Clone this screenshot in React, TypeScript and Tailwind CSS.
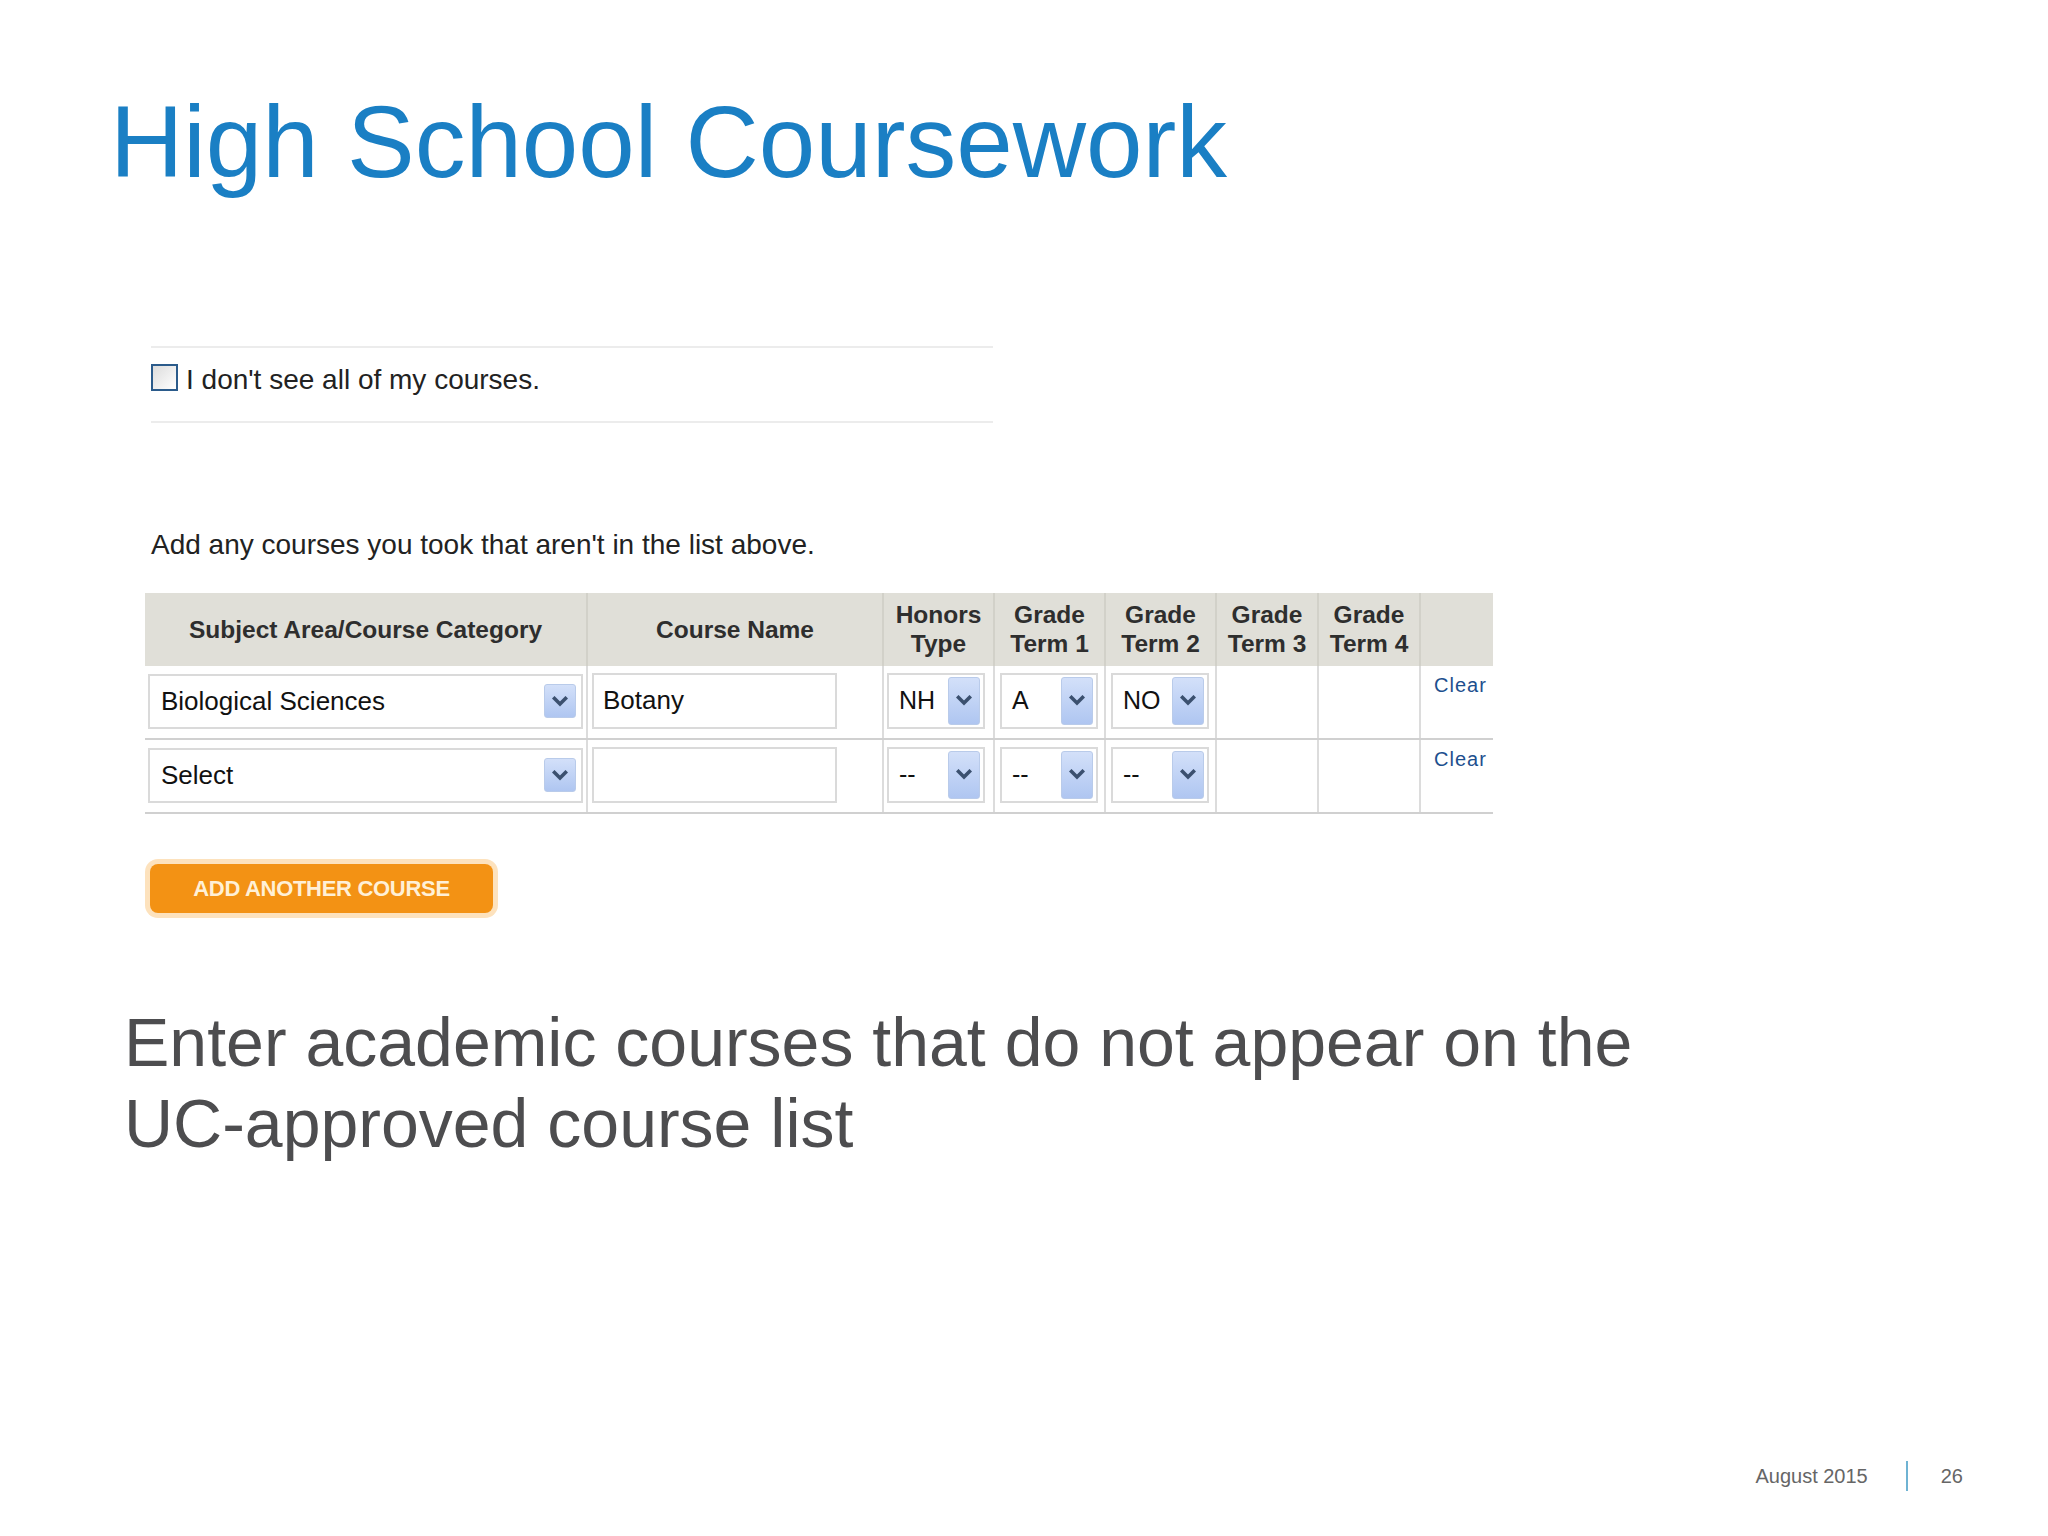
import React from "react";

const sans = { fontFamily: "'Liberation Sans', Arial, sans-serif" };

const Chevron = () => (
  <svg width="16" height="11" viewBox="0 0 16 11" fill="none">
    <path d="M2.5 2.5 L8 8 L13.5 2.5" stroke="#3b506f" strokeWidth="3.6" strokeLinecap="square" />
  </svg>
);

const BigSelect = ({ value }: { value: string }) => (
  <div className="flex items-center h-[55px] w-[435px] border-2 border-[#dadada] bg-white pl-[11px] pr-[5px]">
    <span className="flex-1 text-[26px] text-[#111]">{value}</span>
    <div className="flex items-center justify-center w-[32px] h-[34px] rounded-[3px] border border-[#b9cbea] bg-gradient-to-b from-[#d3e0f9] to-[#afc6f1]">
      <Chevron />
    </div>
  </div>
);

const SmallSelect = ({ value }: { value: string }) => (
  <div className="flex items-center h-[56px] w-[98px] border-2 border-[#dadada] bg-white pl-[10px] pr-[3px]">
    <span className="flex-1 text-[25px] text-[#111]">{value}</span>
    <div className="flex items-center justify-center w-[32px] h-[48px] rounded-[3px] border border-[#b9cbea] bg-gradient-to-b from-[#d3e0f9] to-[#afc6f1]">
      <Chevron />
    </div>
  </div>
);

const TextInput = ({ value }: { value: string }) => (
  <div className="flex items-center h-[56px] w-[245px] border-2 border-[#dadada] bg-white pl-[9px]">
    <span className="text-[26px] text-[#111]">{value}</span>
  </div>
);

type Row = { subject: string; course: string; honors: string; t1: string; t2: string };

const rows: Row[] = [
  { subject: "Biological Sciences", course: "Botany", honors: "NH", t1: "A", t2: "NO" },
  { subject: "Select", course: "", honors: "--", t1: "--", t2: "--" },
];

const CourseTable = () => (
  <div className="ml-[145px] w-[1348px]">
    {/* header */}
    <div className="flex h-[73px] bg-[#e0dfd8] text-[24.5px] font-bold text-[#2e2e2e] leading-[29px] text-center">
      <div className="w-[443px] flex items-center justify-center border-r-2 border-[#d2d1c9]">Subject Area/Course Category</div>
      <div className="w-[296px] flex items-center justify-center border-r-2 border-[#d2d1c9]">Course Name</div>
      <div className="w-[111px] flex items-center justify-center border-r-2 border-[#d2d1c9]">Honors<br />Type</div>
      <div className="w-[111px] flex items-center justify-center border-r-2 border-[#d2d1c9]">Grade<br />Term 1</div>
      <div className="w-[111px] flex items-center justify-center border-r-2 border-[#d2d1c9]">Grade<br />Term 2</div>
      <div className="w-[102px] flex items-center justify-center border-r-2 border-[#d2d1c9]">Grade<br />Term 3</div>
      <div className="w-[102px] flex items-center justify-center border-r-2 border-[#d2d1c9]">Grade<br />Term 4</div>
      <div className="w-[72px]"></div>
    </div>
    {rows.map((r, i) => (
      <div key={i} className="flex h-[74px] border-b-2 border-[#d0d0d0]">
        <div className="w-[443px] pl-[3px] pt-[8px] border-r-2 border-[#dcdcdc]">
          <BigSelect value={r.subject} />
        </div>
        <div className="w-[296px] pl-[4px] pt-[7px] border-r-2 border-[#dcdcdc]">
          <TextInput value={r.course} />
        </div>
        <div className="w-[111px] pl-[3px] pt-[7px] border-r-2 border-[#dcdcdc]">
          <SmallSelect value={r.honors} />
        </div>
        <div className="w-[111px] pl-[5px] pt-[7px] border-r-2 border-[#dcdcdc]">
          <SmallSelect value={r.t1} />
        </div>
        <div className="w-[111px] pl-[5px] pt-[7px] border-r-2 border-[#dcdcdc]">
          <SmallSelect value={r.t2} />
        </div>
        <div className="w-[102px] border-r-2 border-[#dcdcdc]"></div>
        <div className="w-[102px] border-r-2 border-[#dcdcdc]"></div>
        <div className="w-[72px] pl-[13px] pt-[9px]">
          <span className="text-[20px] leading-none tracking-[1px] text-[#1d4f8e]">Clear</span>
        </div>
      </div>
    ))}
  </div>
);

export default function App() {
  return (
    <div className="w-[2048px] h-[1536px] bg-white flex flex-col" style={sans}>
      <h1 className="ml-[110px] mt-[92px] text-[101.5px] leading-none text-[#1a7fc4]">High School Coursework</h1>

      {/* checkbox row */}
      <div className="ml-[151px] mt-[152px] w-[842px] h-[77px] border-y-2 border-[#ececec] flex items-start pt-[15px]">
        <div className="mt-[1px] w-[27px] h-[27px] border-2 border-[#2b5b8b] bg-gradient-to-br from-[#dcdcdc] to-white"></div>
        <span className="ml-[8px] text-[28px] leading-[28px] pt-[3px] text-[#222]">I don't see all of my courses.</span>
      </div>

      <p className="ml-[151px] mt-[108px] text-[28px] leading-none text-[#222]">Add any courses you took that aren't in the list above.</p>

      <div className="mt-[34px]">
        <CourseTable />
      </div>

      {/* add course button */}
      <div className="ml-[145px] mt-[45px] w-[353px] p-[5px] rounded-[13px] bg-[#fde2bd]">
        <div className="h-[49px] rounded-[8px] bg-[#f39214] flex items-center justify-center text-[22px] font-bold tracking-[-0.3px] text-[#fff0d6]">
          ADD ANOTHER COURSE
        </div>
      </div>

      <p className="ml-[124px] mt-[84px] text-[68px] leading-[81px] text-[#4d4d4f]">
        Enter academic courses that do not appear on the
        <br />
        UC-approved course list
      </p>

      {/* footer */}
      <div className="mt-auto mb-[45px] mr-[85px] flex items-center justify-end text-[20px] text-[#666]">
        <span>August 2015</span>
        <div className="ml-[38px] w-[2px] h-[30px] bg-[#6fb3d3]"></div>
        <span className="ml-[33px]">26</span>
      </div>
    </div>
  );
}
